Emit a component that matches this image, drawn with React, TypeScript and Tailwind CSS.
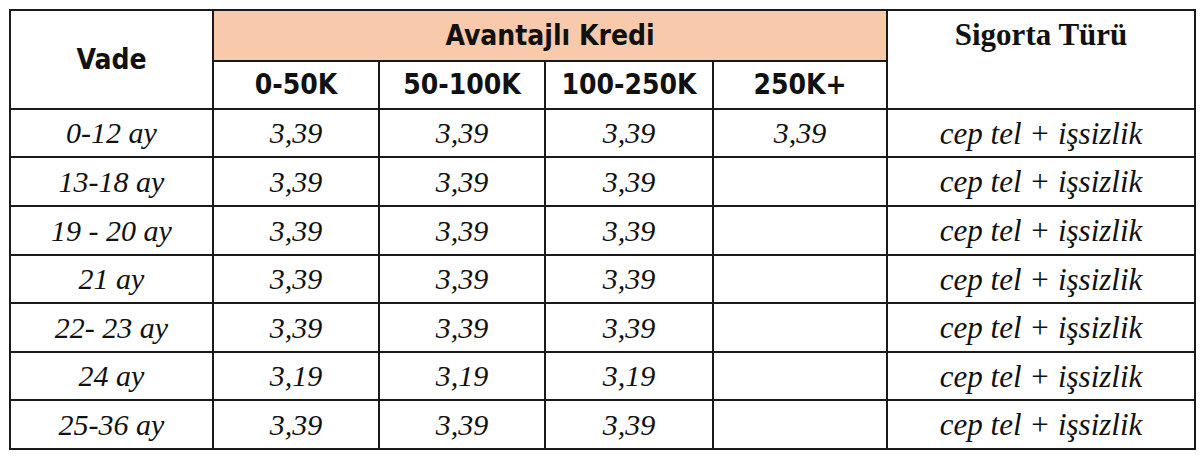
import React from "react";

const rows: [string, string, string, string, string][] = [
  ["0-12 ay", "3,39", "3,39", "3,39", "3,39"],
  ["13-18 ay", "3,39", "3,39", "3,39", ""],
  ["19 - 20 ay", "3,39", "3,39", "3,39", ""],
  ["21 ay", "3,39", "3,39", "3,39", ""],
  ["22- 23 ay", "3,39", "3,39", "3,39", ""],
  ["24 ay", "3,19", "3,19", "3,19", ""],
  ["25-36 ay", "3,39", "3,39", "3,39", ""],
];
const heights = ["h-[48px]", "h-[49px]", "h-[49px]", "h-[48px]", "h-[49px]", "h-[48px]", "h-[49px]"];

const sans = "font-['DejaVu_Sans_Condensed','DejaVu_Sans',sans-serif]";
const serif = "font-['Liberation_Serif',serif]";

export default function App() {
  return (
    <div className="w-[1200px] h-[462px] bg-white pt-[9px] pl-[9px]">
      <table className="border-collapse table-fixed w-[1186px] text-[#111]">
        <colgroup>
          <col className="w-[203px]" />
          <col className="w-[166px]" />
          <col className="w-[166px]" />
          <col className="w-[168px]" />
          <col className="w-[174px]" />
          <col className="w-[308px]" />
        </colgroup>
        <tbody>
          <tr className="h-[51px]">
            <td rowSpan={2} className={`border-2 border-[#1a1a1a] text-center align-middle font-bold text-[28px] ${sans}`}>
              Vade
            </td>
            <td colSpan={4} className={`border-2 border-[#1a1a1a] bg-[#f8c9aa] text-center align-middle font-bold text-[28px] ${sans}`}>
              Avantajlı Kredi
            </td>
            <td rowSpan={2} className={`border-2 border-[#1a1a1a] text-center align-top pt-[4px] font-bold text-[31px] leading-[40px] ${serif}`}>
              Sigorta Türü
            </td>
          </tr>
          <tr className="h-[48px]">
            {["0-50K", "50-100K", "100-250K", "250K+"].map((h) => (
              <td key={h} className={`border-2 border-[#1a1a1a] text-center align-middle font-bold text-[28px] ${sans}`}>
                {h}
              </td>
            ))}
          </tr>
          {rows.map((r, i) => (
            <tr key={i} className={heights[i]}>
              {r.map((c, j) => (
                <td key={j} className={`border-2 border-[#1a1a1a] text-center align-middle italic text-[30px] leading-none ${serif}`}>
                  {c}
                </td>
              ))}
              <td className={`border-2 border-[#1a1a1a] text-center align-middle italic text-[31px] leading-none ${serif}`}>
                cep tel + işsizlik
              </td>
            </tr>
          ))}
        </tbody>
      </table>
    </div>
  );
}
